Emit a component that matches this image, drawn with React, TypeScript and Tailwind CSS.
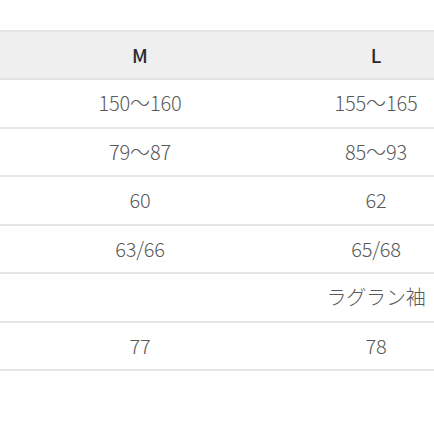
import React from "react";

const rows: [string, string][] = [
  ["150〜160", "155〜165"],
  ["79〜87", "85〜93"],
  ["60", "62"],
  ["63/66", "65/68"],
  ["", "ラグラン袖"],
  ["77", "78"],
];

export default function App() {
  return (
    <div className="w-[434px] h-[434px] bg-white overflow-hidden" style={{ fontFamily: '"Noto Sans CJK JP", "Noto Sans", sans-serif' }}>
      <div className="w-[494px] mt-[30px] border-t-2 border-[#e6e6e6]">
        <div className="flex h-[48px] bg-[#efefef] border-b-2 border-[#e2e2e2] items-center">
          <div className="w-[22px]" />
          <div className="w-[236px] text-center text-[19px] font-medium text-[#2a2a2a]">M</div>
          <div className="w-[236px] text-center text-[19px] font-medium text-[#2a2a2a]">L</div>
        </div>
        {rows.map((r, i) => (
          <div key={i} className="flex h-[48.5px] border-b-2 border-[#e6e6e6] items-center">
            <div className="w-[22px]" />
            <div className="w-[236px] text-center text-[20px] font-light text-[#5a5a5a] tracking-[-0.2px]">{r[0]}</div>
            <div className="w-[236px] text-center text-[20px] font-light text-[#5a5a5a] tracking-[-0.2px]">{r[1]}</div>
          </div>
        ))}
      </div>
    </div>
  );
}
